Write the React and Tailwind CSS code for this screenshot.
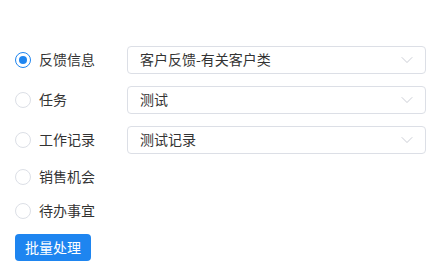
import { ChevronDown } from "lucide-react";

const rows = [
  { label: "反馈信息", value: "客户反馈-有关客户类", checked: true },
  { label: "任务", value: "测试" },
  { label: "工作记录", value: "测试记录" },
  { label: "销售机会" },
  { label: "待办事宜" },
];

function Radio({ checked }) {
  return checked ? (
    <span className="w-4 h-4 rounded-full border border-[#1e85f0] flex items-center justify-center shrink-0">
      <span className="w-2 h-2 rounded-full bg-[#1e85f0]" />
    </span>
  ) : (
    <span className="w-4 h-4 rounded-full border border-[#dcdfe6] bg-white shrink-0" />
  );
}

export default function App() {
  return (
    <div
      className="w-[446px] h-[280px] bg-white pt-[46px] pl-[15px] pr-[20px] text-[14px] text-[#333]"
      style={{ fontFamily: '"Noto Sans CJK SC", "Noto Sans", sans-serif' }}
    >
      <div className="flex flex-col gap-3">
        {rows.map((r) => (
          <div key={r.label} className="flex items-center">
            <div className="w-[112px] flex items-center gap-2 h-[22px]">
              <Radio checked={r.checked} />
              <span className="leading-none pb-[3px]">{r.label}</span>
            </div>
            {r.value && (
              <div className="flex-1 h-[28px] border border-[#dcdfe6] rounded flex items-center justify-between pl-3 pr-2">
                <span className="leading-none pb-[3px]">{r.value}</span>
                <ChevronDown size={20} strokeWidth={1} className="text-[#c0c4cc]" />
              </div>
            )}
          </div>
        ))}
        <button className="self-start h-[27px] px-[10px] pb-[2px] bg-[#1e85f0] text-white rounded-sm leading-none">
          批量处理
        </button>
      </div>
    </div>
  );
}
